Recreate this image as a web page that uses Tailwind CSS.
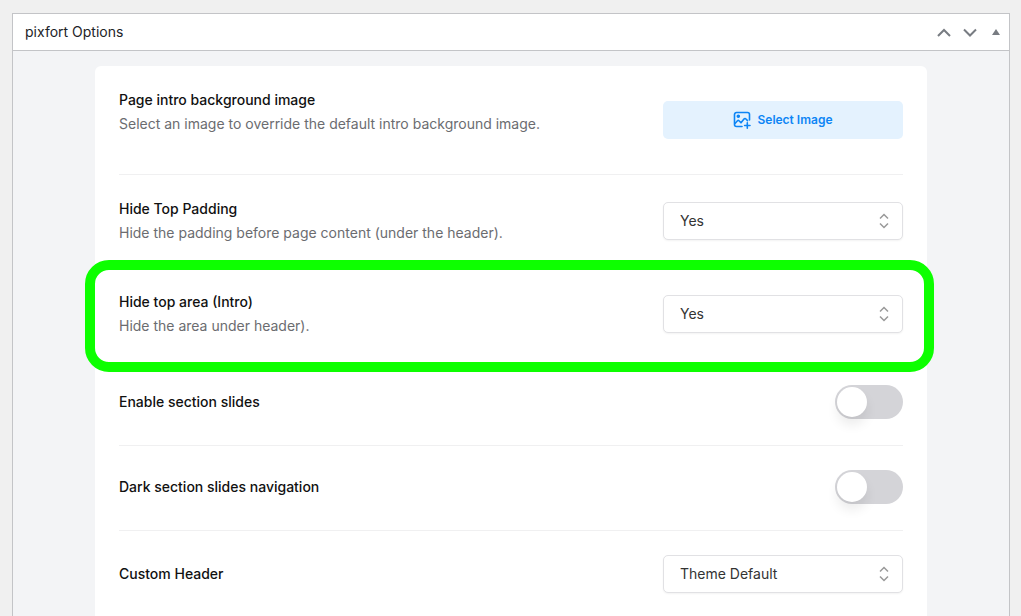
<!DOCTYPE html>
<html lang="en">
<head>
  <meta charset="UTF-8" />
  <meta name="viewport" content="width=device-width, initial-scale=1" />
  <title>pixfort Options</title>
  <script src="https://cdn.jsdelivr.net/npm/@tailwindcss/browser@4"></script>
</head>
<body class="min-h-screen bg-[#f0f0f0] pt-[13px] font-['Inter',sans-serif] text-sm text-[#1d2327]">
  <section class="ml-3 mr-[11px] border border-b-0 border-[#c3c4c7] bg-[#f3f4f6]">
    <header class="flex h-[37px] items-center justify-between border-b border-[#c3c4c7] bg-white pl-3 pr-1.5">
      <h2>pixfort Options</h2>
      <div class="flex items-center gap-3 text-[#787c82]">
        <button type="button" aria-label="Move up">
          <svg class="h-3.5 w-3.5" viewBox="0 0 14 14" fill="none" stroke="currentColor" stroke-width="2"><path d="M1 11l6-6 6 6" /></svg>
        </button>
        <button type="button" aria-label="Move down">
          <svg class="h-3.5 w-3.5" viewBox="0 0 14 14" fill="none" stroke="currentColor" stroke-width="2"><path d="M1 4.500l6 6 6-6" /></svg>
        </button>
        <button type="button" aria-label="Toggle panel">
          <svg class="h-3.5 w-3.5" viewBox="0 0 14 14" fill="currentColor"><path d="M3 10l4-6 4 6z" /></svg>
        </button>
      </div>
    </header>

    <div class="mx-[82px] mt-[15px] rounded-t-md bg-white px-6">
      <!-- Background image -->
      <div class="flex items-center justify-between gap-6 border-b border-[#f0f0f1] py-[22px]">
        <div class="pb-4 leading-6">
          <h3 class="font-medium text-[#111]">Page intro background image</h3>
          <p class="text-[#6b6c70]">Select an image to override the default intro background image.</p>
        </div>
        <button type="button" class="flex h-[38px] w-60 shrink-0 items-center justify-center gap-1.5 rounded-[5px] bg-[#e4f2fe] text-xs font-semibold text-[#0d85f5]">
          <svg class="h-[18px] w-[18px]" viewBox="0 0 18 18" fill="none" stroke="currentColor" stroke-width="1.6" stroke-linecap="round" stroke-linejoin="round">
            <path d="M9 15.500H3.500a2 2 0 0 1-2-2V3.500a2 2 0 0 1 2-2h11a2 2 0 0 1 2 2V9" />
            <path d="M2 12.500l2.500-2.700c.5-.5 1-.5 1.500 0l2 2 2.800-3.600c.7-.9 1.700-.9 2.400 0l1.300 1.400" />
            <path d="M14.300 11.800v5.400M11.600 14.500h5.400" />
            <circle cx="5.300" cy="5.300" r="1" fill="currentColor" />
          </svg>
          Select Image
        </button>
      </div>

      <!-- Top padding -->
      <div class="flex items-center justify-between gap-6 pt-[22px] pb-[23px]">
        <div class="leading-6">
          <label for="topPadding" class="block font-medium text-[#111]">Hide Top Padding</label>
          <p class="text-[#6b6c70]">Hide the padding before page content (under the header).</p>
        </div>
        <div class="relative w-60 shrink-0">
          <select id="topPadding" class="h-[38px] w-full appearance-none rounded-[5px] border border-[#e1e1e4] bg-white px-4 text-[#333] shadow-xs">
            <option>Yes</option>
            <option>No</option>
          </select>
          <svg class="pointer-events-none absolute top-[11px] right-[11px] h-4 w-4 text-[#999]" viewBox="0 0 16 16" fill="none" stroke="currentColor" stroke-width="1.5"><path d="M4 5.500l4-4 4 4M4 10.500l4 4 4-4" /></svg>
        </div>
      </div>

      <!-- Intro area, highlighted -->
      <div class="relative flex items-center justify-between gap-6 pt-[22px] pb-[23px]">
        <div class="pointer-events-none absolute -top-2 -right-[31px] -bottom-[11px] -left-[34px] rounded-3xl border-10 border-[#0dff00]"></div>
        <div class="leading-6">
          <label for="topArea" class="block font-medium text-[#111]">Hide top area (Intro)</label>
          <p class="text-[#6b6c70]">Hide the area under header).</p>
        </div>
        <div class="relative w-60 shrink-0">
          <select id="topArea" class="h-[38px] w-full appearance-none rounded-[5px] border border-[#e1e1e4] bg-white px-4 text-[#333] shadow-xs">
            <option>Yes</option>
            <option>No</option>
          </select>
          <svg class="pointer-events-none absolute top-[11px] right-[11px] h-4 w-4 text-[#999]" viewBox="0 0 16 16" fill="none" stroke="currentColor" stroke-width="1.5"><path d="M4 5.500l4-4 4 4M4 10.500l4 4 4-4" /></svg>
        </div>
      </div>

      <!-- Section slides -->
      <div class="flex items-center justify-between gap-6 border-b border-[#f0f0f1] pt-6 pb-[26px]">
        <label for="slides" class="font-medium leading-6 text-[#111]">Enable section slides</label>
        <input id="slides" type="checkbox" class="h-[34px] w-[68px] shrink-0 appearance-none rounded-full bg-[#d4d4d8] p-0.5 before:block before:h-[30px] before:w-[30px] before:rounded-full before:bg-white before:shadow-[0_8px_12px_rgba(0,0,0,0.08)] checked:bg-[#0d85f5] checked:before:ml-auto" />
      </div>
      <div class="flex items-center justify-between gap-6 border-b border-[#f0f0f1] pt-6 pb-[26px]">
        <label for="darkNav" class="font-medium leading-6 text-[#111]">Dark section slides navigation</label>
        <input id="darkNav" type="checkbox" class="h-[34px] w-[68px] shrink-0 appearance-none rounded-full bg-[#d4d4d8] p-0.5 before:block before:h-[30px] before:w-[30px] before:rounded-full before:bg-white before:shadow-[0_8px_12px_rgba(0,0,0,0.08)] checked:bg-[#0d85f5] checked:before:ml-auto" />
      </div>

      <!-- Header -->
      <div class="flex items-center justify-between gap-6 pt-6 pb-[23px]">
        <label for="customHeader" class="font-medium leading-6 text-[#111]">Custom Header</label>
        <div class="relative w-60 shrink-0">
          <select id="customHeader" class="h-[38px] w-full appearance-none rounded-[5px] border border-[#e1e1e4] bg-white px-4 text-[#333] shadow-xs">
            <option>Theme Default</option>
          </select>
          <svg class="pointer-events-none absolute top-[11px] right-[11px] h-4 w-4 text-[#999]" viewBox="0 0 16 16" fill="none" stroke="currentColor" stroke-width="1.5"><path d="M4 5.500l4-4 4 4M4 10.500l4 4 4-4" /></svg>
        </div>
      </div>
    </div>
  </section>
</body>
</html>
